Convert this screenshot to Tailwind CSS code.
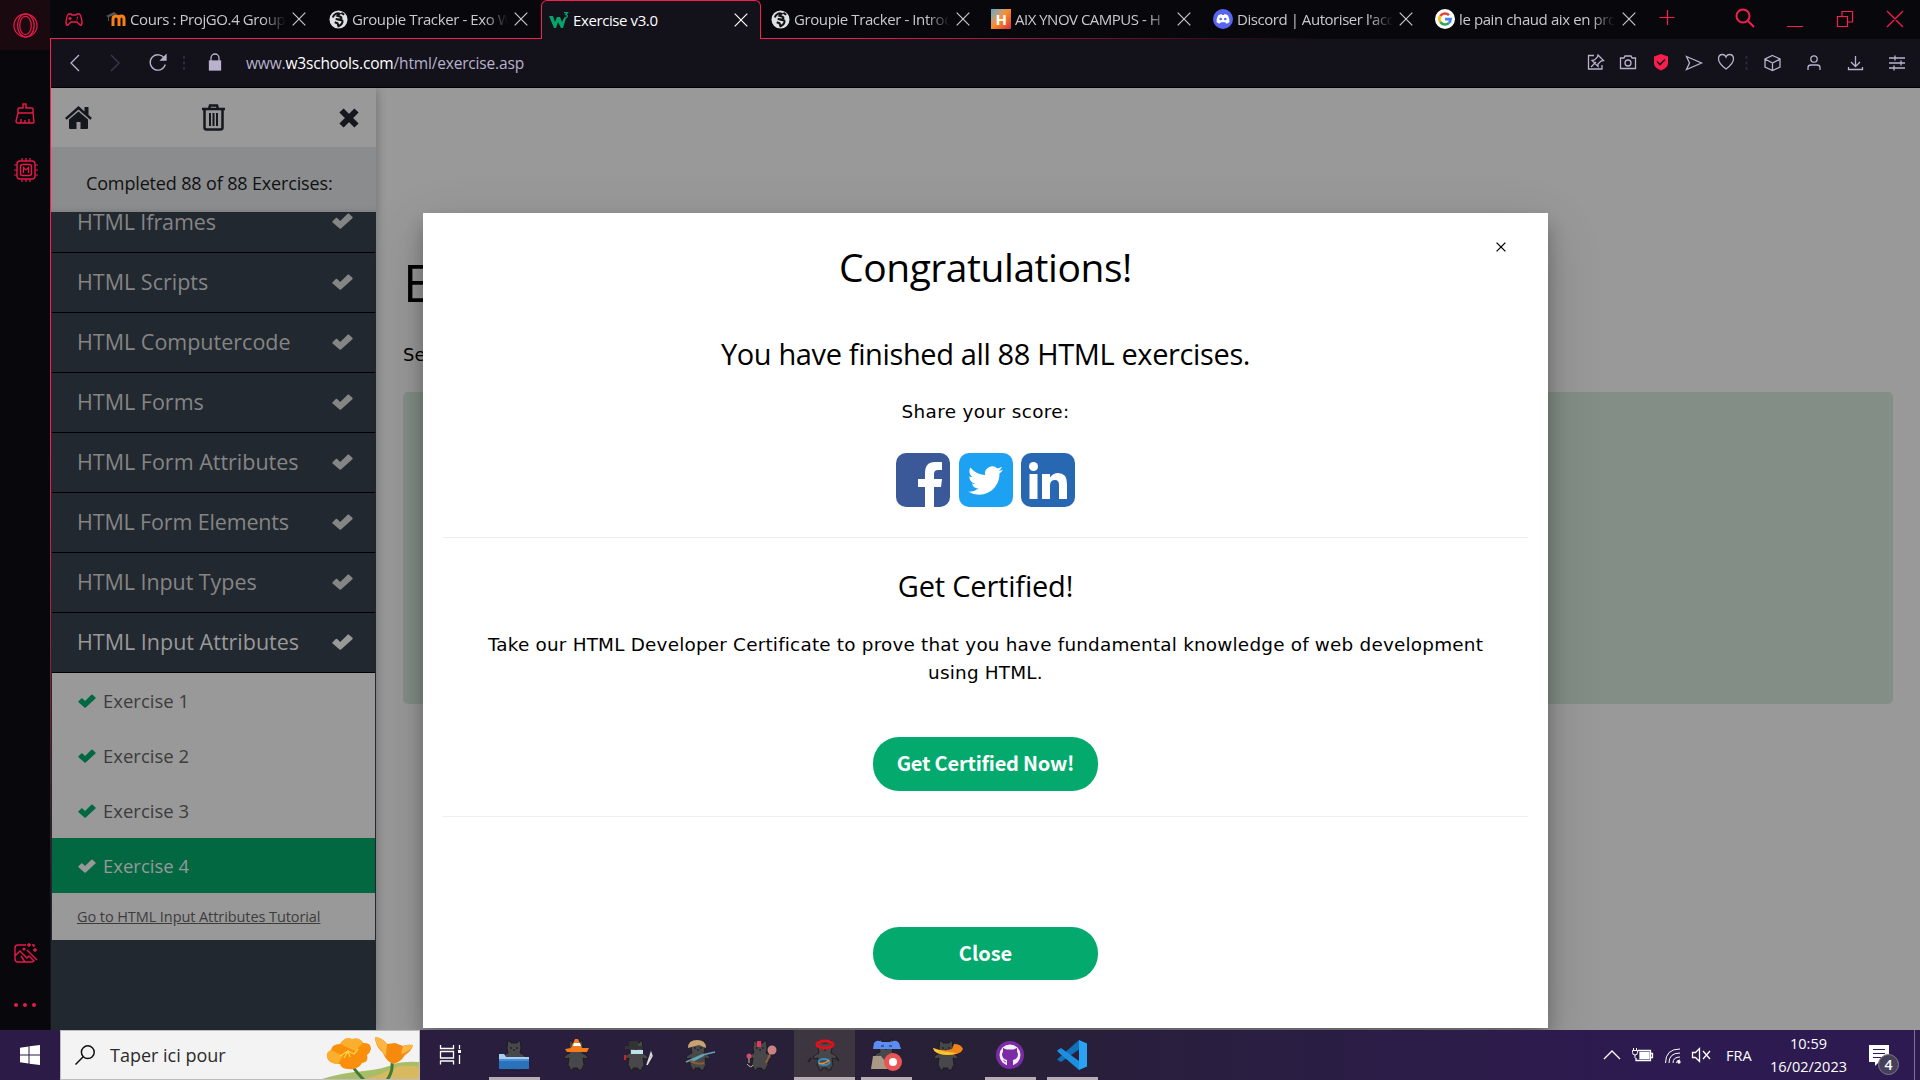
<!DOCTYPE html>
<html lang="fr">
<head>
<meta charset="utf-8">
<title>Exercise v3.0</title>
<script src="https://cdn.jsdelivr.net/npm/@tailwindcss/browser@4"></script>
</head>
<body class="w-[1920px] h-[1080px] overflow-hidden bg-[#08070b] font-['Open_Sans',sans-serif] flex flex-col">
<svg class="hidden">
  <symbol id="check" viewBox="0 0 21 16"><path d="M.6 8.2 3.800 5a1 1 0 0 1 1.400 0L8.200 8 15.600.700a1 1 0 0 1 1.400 0L20.400 3.800a1 1 0 0 1 0 1.400L9 15.500a1 1 0 0 1-1.400 0L.6 9.600a1 1 0 0 1 0-1.400z"/></symbol>
  <symbol id="x" viewBox="0 0 14 14"><path d="M.7.7l12.600 12.600M13.300.7.7 13.300" fill="none" stroke="currentColor" stroke-width="1.200"/></symbol>
  <symbol id="globe" viewBox="0 0 20 20"><circle cx="10" cy="10" r="9.500" fill="#dfe1e5"/><path d="M4 8c1-4 5-5 7-4l-2 2 3 1c2 1 1 3-1 3l-4-.5M9 10l5 1c1 2-1 5-4 6l-1-3-3-1M13 3l3 2" fill="none" stroke="#111" stroke-width="2.200"/></symbol>
</svg>

<div class="flex h-[1030px]">
  <!-- Browser side rail -->
  <aside class="w-[50px] flex flex-col items-center text-[#e8194a]">
    <div class="w-full h-[50px] bg-[#1a0a10] flex items-center justify-center">
      <svg class="size-[25px]" viewBox="0 0 26 26" fill="none" stroke="currentColor" stroke-width="1.300"><circle cx="13" cy="13" r="12"/><ellipse cx="13" cy="13" rx="6" ry="9.500"/><path d="M13 1c-11 1-11 23 0 24M13 1c4 0 9 4 9 12s-5 12-9 12"/></svg>
    </div>
    <svg class="mt-[53px] w-5 h-[21px]" viewBox="0 0 20 21" fill="none" stroke="currentColor" stroke-width="1.400"><path d="M8 5V1h3v4h6q1 0 1 1v4H3V6q0-1 1-1zM3 10 1 18q0 2 2 2h15q1 0 1-1l-1-9M6 16v4M10 17v3M14 16v4"/></svg>
    <svg class="mt-[34px] ml-px size-6" viewBox="0 0 24 24" fill="none" stroke="currentColor" stroke-width="1.400"><rect x="3" y="3" width="18" height="18" rx="3"/><rect x="6.500" y="6.500" width="11" height="11" rx="2"/><path d="M9.500 15V9.500l2.500 2.500 2.500-2.500V15M8 0v3M12 0v3M16 0v3M8 21v3M12 21v3M16 21v3M0 7h3M0 12h3M0 17h3M21 7h3M21 12h3M21 17h3" stroke-width="1.200"/></svg>
    <svg class="mt-[761px] ml-[2px] w-6 h-5" viewBox="0 0 24 20" fill="none" stroke="currentColor" stroke-width="1.400"><path d="M12 2H4Q1 2 1 5v11q0 3 3 3h13q3 0 3-2M1 13l5-5 5 5 2 2 2-2 5 5M7 13l4 6M13 7l10 10M15 0v4M13 2h4M21 5v4M19 7h4M18 2h2v2"/><circle cx="10" cy="6" r=".8"/></svg>
    <div class="mt-[40px] flex gap-[5px]"><i class="size-1 rounded-full bg-[#e8194a]"></i><i class="size-1 rounded-full bg-[#e8194a]"></i><i class="size-1 rounded-full bg-[#e8194a]"></i></div>
  </aside>

  <div class="w-[1870px] flex flex-col">
    <!-- Tab strip -->
    <header class="h-[39px] flex text-[#c9c9cd] text-[15px] tracking-[-0.4px] leading-[38px] whitespace-nowrap">
      <div class="w-[50px] flex flex-col shrink-0"><div class="h-[38px] pl-[15px] pt-[13px]"><svg class="w-[18px] h-[13px]" viewBox="0 0 18 13" fill="none" stroke="#f01c4c" stroke-width="1.400"><path d="M4 1h2l1 1h4l1-1h2q2 0 3 8 0 4-2 3l-3-3H6l-3 3q-2 1-2-3Q2 1 4 1z"/><path d="M5 4v3M3.500 5.500h3M12 4.500h1M11.500 6.500h1"/></svg></div><div class="h-px bg-[#fa1e4e]"></div></div>
      <div class="w-[221px] border-b border-[#fa1e4e] flex items-center pl-[6px]">
        <svg class="w-5 h-3.5 mr-1 shrink-0" viewBox="0 0 20 14"><path d="M7 14V7q0-3 3-3t3 3v7M13 7q0-3 2.500-3T18 7v7" fill="none" stroke="#f98012" stroke-width="3"/><path d="M0 4 8 0l3 2-8 3v4H2V5z" fill="#555"/></svg>
        <span class="w-[156px] mask-r-from-85%">Cours : ProjGO.4 Group</span><svg class="size-3.5 ml-[6px]"><use href="#x"/></svg>
      </div>
      <div class="w-[220px] border-b border-[#fa1e4e] flex items-center pl-[8px]">
        <svg class="size-[19px] mr-1 shrink-0"><use href="#globe"/></svg>
        <span class="w-[156px] mask-r-from-85%">Groupie Tracker - Exo W</span><svg class="size-3.5 ml-[6px]"><use href="#x"/></svg>
      </div>
      <div class="w-[220px] border border-b-0 border-[#fa1e4e] rounded-t-[6px] bg-[#13111a] text-white flex items-center pl-[7px]">
        <svg class="w-5 h-4 mr-1 shrink-0" viewBox="0 0 20 16"><path d="M0 4h4l2 6 2-5h3l2 5 2-4h2l-3 10h-2l-3-6-2 6H5z" fill="#04a56c"/><path d="M15 .6h3.500l-1.800 2q2 .2 1.600 1.900T15 6" fill="none" stroke="#04a56c" stroke-width="1.200"/></svg>
        <span class="w-[156px]">Exercise v3.0</span><svg class="size-3.5 ml-[5px]"><use href="#x"/></svg>
      </div>
      <div class="flex w-[665px] border-b [border-image:linear-gradient(to_right,#fa1e4e,#fa1e4e_10%,transparent_85%)_1]">
        <div class="w-[222px] flex items-center pl-[10px]">
          <svg class="size-[19px] mr-1 shrink-0"><use href="#globe"/></svg>
          <span class="w-[156px] mask-r-from-85%">Groupie Tracker - Introd</span><svg class="size-3.5 ml-[6px]"><use href="#x"/></svg>
        </div>
        <div class="w-[221px] flex items-center pl-[8px]">
          <div class="size-5 mr-1 shrink-0 bg-linear-to-br from-[#3aa8c9] via-[#fb8a20] to-[#d32a3c] text-white font-bold text-[15px] leading-5 text-center">H</div>
          <span class="w-[156px] tracking-[-0.5px] mask-r-from-85%">AIX YNOV CAMPUS - H</span><svg class="size-3.5 ml-[6px]"><use href="#x"/></svg>
        </div>
        <div class="w-[221px] flex items-center pl-[9px]">
          <svg class="size-5 mr-1 shrink-0" viewBox="0 0 20 20"><circle cx="10" cy="10" r="10" fill="#5865f2"/><path d="M5 6.500q2-1.500 3.500-1.500l.5 1h2l.5-1q2 0 3.500 1.500 1.500 3 1.500 6.500-2 2-3.500 1.500l-.8-1.300H7.800L7 14.500Q5 14.500 3.500 13 3.500 9.500 5 6.500z" fill="#fff"/><circle cx="7.700" cy="10" r="1.300" fill="#5865f2"/><circle cx="12.300" cy="10" r="1.300" fill="#5865f2"/></svg>
          <span class="w-[156px] tracking-[-0.450px] mask-r-from-85%">Discord | Autoriser l'acc</span><svg class="size-3.5 ml-[6px]"><use href="#x"/></svg>
        </div>
      </div>
      <div class="w-[221px] flex items-center pl-[9px] pb-px">
        <svg class="size-5 mr-1 shrink-0" viewBox="0 0 20 20" fill="none" stroke-width="2.600"><circle cx="10" cy="10" r="10" fill="#fff"/><path d="M14 6.200A5.600 5.600 0 0 0 5.300 7" stroke="#ea4335"/><path d="M5.300 7a5.600 5.600 0 0 0 0 6" stroke="#fbbc05"/><path d="M5.300 13a5.600 5.600 0 0 0 8.700.8" stroke="#34a853"/><path d="M14 13.800a5.600 5.600 0 0 0 1.600-3.700H10" stroke="#4285f4"/></svg>
        <span class="w-[156px] mask-r-from-85%">le pain chaud aix en pro</span><svg class="size-3.5 ml-[7px]"><use href="#x"/></svg>
      </div>
      <svg class="w-[273px] h-[38px] shrink-0" viewBox="1647 0 273 38" fill="none" stroke="#fa1e4e"><path d="M1659.500 17.500h15M1667.500 10v15M1787 26.500h16M1837.500 16.500h10v10h-10zM1842 16v-4.500h10.500V22H1848M1887 11l16 16M1903 11l-16 16" stroke-width="1.200"/><g stroke-width="2"><circle cx="1743" cy="16" r="6.500"/><path d="m1748 21 6 6"/></g></svg>
    </header>

    <div class="flex grow">
      <div class="w-px bg-linear-to-b from-[#fa1e4e] from-40% to-[#13111a] to-90%"></div>
      <div class="grow flex flex-col">
        <!-- Address bar -->
        <nav class="h-[49px] bg-[#13111a] border-b border-black flex text-[#b8b2cc]">
          <svg class="w-[195px] h-12 shrink-0" viewBox="51 39 195 48" fill="none" stroke="currentColor" stroke-width="1.300"><path d="m79 55-8 8 8 8"/><path d="m111 55 8 8-8 8" stroke="#3c3949"/><path d="M164.500 58.500a7.700 7.700 0 1 0 .8 6"/><path d="M161 60h5v-5z" fill="currentColor"/><path d="M184 56v14" stroke="#2c2939" stroke-width="2" stroke-dasharray="3 2.500"/><path d="M211 61v-3a4 4 0 0 1 8 0v3"/><rect x="209.500" y="61" width="11" height="9" fill="currentColor"/></svg>
          <div class="w-[1331px] text-[15.500px] tracking-[-0.170px] leading-[48px]">www.<span class="text-white">w3schools.com</span>/html/exercise.asp</div>
          <svg class="w-[343px] h-12" viewBox="1577 39 343 48" fill="none" stroke="currentColor" stroke-width="1.300">
            <path d="M1594 55.500h-5.500v13.500h13.500v-4M1591 67l5-5M1598 55l5.500 5.500-2.500.5-3 3 0 2.500-6-6 2.500-.5 3-3z"/>
            <path d="M1620.500 58h3.500l1-2h6l1 2h3.500v10.500h-15z"/><circle cx="1628" cy="63" r="3"/>
            <path d="m1661 54 7 2.500v7q0 4-7 7-7-3-7-7v-7z" fill="#fa1e4e" stroke="none"/><path d="m1657 61.500 3 3 5-5" stroke="#13111a" stroke-width="1.600"/>
            <path d="m1686.500 56.500 15 6.500-15 6.500 3-6.500z"/>
            <path d="M1726 69q-7.500-5.500-7.500-10 0-4.500 4-4.500 2.500 0 3.500 2.500 1-2.500 3.500-2.500 4 0 4 4.500 0 4.500-7.500 10z"/>
            <path d="M1746.500 56v14" stroke="#2c2939" stroke-width="2" stroke-dasharray="3 2.500"/>
            <path d="m1772.500 55.500 7.500 3.500v8l-7.500 3.500-7.500-3.500v-8zM1765 59l7.500 4 7.500-4M1772.500 63v7.500"/>
            <circle cx="1814" cy="59" r="3.200"/><path d="M1808 70v-2.500q0-2.500 3-2.500h6q3 0 3 2.500V70"/>
            <path d="M1855.500 56v10M1851 62l4.500 4.500 4.500-4.500M1848.500 67v2.500h14V67"/>
            <path d="M1889 58h16M1889 63h16M1889 68h16M1895 55.500v5M1901 60.500v5M1894 65.500v5"/>
          </svg>
        </nav>

        <!-- Page -->
        <main class="relative h-[942px] flex bg-[#999] overflow-hidden">
          <section class="w-[325px] flex flex-col bg-[#22282f] shadow-[0_2px_10px_rgba(0,0,0,0.3)]">
            <div class="h-[59px] shrink-0 bg-[#999] flex items-center justify-between pl-[14px] pr-[16px] text-[#15171f]">
              <svg class="w-[27px] h-[23px]" viewBox="0 0 27 23" fill="currentColor"><path d="M13.500 0 0 12l1.700 1.800L13.500 3.600l11.800 10.200L27 12l-3.500-3.100V1h-4v4.400zM13.500 5.500 4 13.600V22q0 1 1 1h6.500v-7h4v7H22q1 0 1-1v-8.400z"/></svg>
              <svg class="w-[23px] h-[27px] -ml-[3px] -mt-px" viewBox="0 0 23 27" fill="none" stroke="currentColor" stroke-width="2"><path d="M0 5h23M7 5l1-3.500h7L16 5M2.500 5v18.500q0 2 2 2h14q2 0 2-2V5" stroke-width="2.500"/><path d="M8 9v13M11.500 9v13M15 9v13"/></svg>
              <svg class="size-[22px]" viewBox="0 0 22 22"><path d="m3.500 3.500 15 15M18.500 3.500l-15 15" stroke="currentColor" stroke-width="6"/></svg>
            </div>
            <div class="h-[65px] shrink-0 bg-[#8b8c8e] pl-[35px] pt-[23px] text-[18px] tracking-[-0.150px] leading-[27px] text-[#111] whitespace-nowrap shadow-[inset_0_-6px_6px_-6px_rgba(0,0,0,0.15)]">Completed 88 of 88 Exercises:</div>
            <div class="px-px flex flex-col text-[21.500px] leading-[58px] text-[#858585] whitespace-nowrap">
              <div class="h-[41px] border-b border-black overflow-hidden flex items-end justify-between pl-[25px] pr-[22px]"><span class="h-[58px] mb-px tracking-[-0.100px]">HTML Iframes</span><svg class="w-[21px] h-4 mb-[23px] fill-current"><use href="#check"/></svg></div>
              <div class="h-[60px] border-b border-black flex items-center justify-between pl-[25px] pr-[22px]"><span class="pb-px">HTML Scripts</span><svg class="w-[21px] h-4 mb-px fill-current"><use href="#check"/></svg></div>
              <div class="h-[60px] border-b border-black flex items-center justify-between pl-[25px] pr-[22px]"><span class="pb-px">HTML Computercode</span><svg class="w-[21px] h-4 mb-px fill-current"><use href="#check"/></svg></div>
              <div class="h-[60px] border-b border-black flex items-center justify-between pl-[25px] pr-[22px]"><span class="pb-px">HTML Forms</span><svg class="w-[21px] h-4 mb-px fill-current"><use href="#check"/></svg></div>
              <div class="h-[60px] border-b border-black flex items-center justify-between pl-[25px] pr-[22px]"><span class="pb-px">HTML Form Attributes</span><svg class="w-[21px] h-4 mb-px fill-current"><use href="#check"/></svg></div>
              <div class="h-[60px] border-b border-black flex items-center justify-between pl-[25px] pr-[22px]"><span class="pb-px tracking-[-0.150px]">HTML Form Elements</span><svg class="w-[21px] h-4 mb-px fill-current"><use href="#check"/></svg></div>
              <div class="h-[60px] border-b border-black flex items-center justify-between pl-[25px] pr-[22px]"><span class="pb-px tracking-[-0.070px]">HTML Input Types</span><svg class="w-[21px] h-4 mb-px fill-current"><use href="#check"/></svg></div>
              <div class="h-[60px] border-b border-black flex items-center justify-between pl-[25px] pr-[22px] text-[#999]"><span class="pb-px">HTML Input Attributes</span><svg class="w-[21px] h-4 mb-px fill-current"><use href="#check"/></svg></div>
            </div>
            <div class="mx-px bg-[#999] text-[18.500px] text-[#3c3c3c] flex flex-col whitespace-nowrap">
              <div class="h-[55px] flex items-center gap-[7px] pt-px pl-[26px]"><svg class="w-[18px] h-3.5 fill-[#026841]"><use href="#check"/></svg>Exercise 1</div>
              <div class="h-[55px] flex items-center gap-[7px] pt-px pl-[26px]"><svg class="w-[18px] h-3.5 fill-[#026841]"><use href="#check"/></svg>Exercise 2</div>
              <div class="h-[55px] flex items-center gap-[7px] pt-px pl-[26px]"><svg class="w-[18px] h-3.5 fill-[#026841]"><use href="#check"/></svg>Exercise 3</div>
              <div class="h-[55px] flex items-center gap-[7px] pt-px pl-[26px] bg-[#026841] text-[#999]"><svg class="w-[18px] h-3.5 fill-current"><use href="#check"/></svg>Exercise 4</div>
              <div class="h-[47px] flex items-center pl-[25px] text-[14.500px] tracking-[-0.080px] underline">Go to HTML Input Attributes Tutorial</div>
            </div>
          </section>

          <section class="w-[1544px] pl-[27px] pr-[27px] flex flex-col">
            <h1 class="mt-[158px] text-[52px] leading-[72px]">Exercise</h1>
            <p class="mt-[23px] font-['DejaVu_Sans',sans-serif] text-[18px] leading-7">Select the correct answer</p>
            <div class="mt-[23px] h-[312px] rounded-[5px] bg-[#838f86]"></div>
          </section>

          <!-- Completion dialog, over the page -->
          <div class="absolute left-[372px] top-[125px] w-[1125px] h-[815px] px-5 bg-white text-black shadow-[0_12px_16px_rgba(0,0,0,0.24),0_17px_50px_rgba(0,0,0,0.19)] flex flex-col items-center whitespace-nowrap">
            <svg class="absolute right-[42px] top-[29px] size-[10px]" viewBox="0 0 10 10"><path d="m.6.6 8.800 8.800M9.400.6.6 9.400" stroke="#000" stroke-width="1.300"/></svg>
            <h2 class="mt-[24px] text-[39px] leading-[60px] tracking-[-0.450px]">Congratulations!</h2>
            <h3 class="mt-[34px] text-[29px] leading-[45px] tracking-[-0.370px]">You have finished all 88 HTML exercises.</h3>
            <p class="mt-[22px] font-['DejaVu_Sans',sans-serif] text-[18.400px] leading-7 tracking-[0.380px]">Share your score:</p>
            <div class="mt-[27px] flex gap-[8.500px]">
              <svg class="size-[54px]" viewBox="0 0 54 54"><rect width="54" height="54" rx="10" fill="#3b5998"/><path d="M29 54V34h-7v-8h7v-6q0-11 10-11h7v8h-4q-4 0-4 4v5h8l-1 8h-7v20z" fill="#fff"/></svg>
              <svg class="size-[54px]" viewBox="0 0 54 54"><rect width="54" height="54" rx="10" fill="#1da1f2"/><path transform="translate(9 10) scale(1.460)" d="M23.950 4.570a10 10 0 0 1-2.820.770 4.960 4.960 0 0 0 2.160-2.720c-.950.560-2 .970-3.130 1.200a4.920 4.920 0 0 0-8.380 4.480C7.690 8.100 4.070 6.130 1.640 3.160a4.820 4.820 0 0 0-.670 2.470c0 1.710.870 3.210 2.190 4.100a4.900 4.900 0 0 1-2.230-.620v.060a4.920 4.920 0 0 0 3.950 4.830 5 5 0 0 1-2.210.080 4.940 4.940 0 0 0 4.600 3.420A9.870 9.870 0 0 1 0 19.540a13.990 13.990 0 0 0 7.550 2.210c9.050 0 14-7.500 14-13.980 0-.210 0-.420-.020-.630a9.940 9.940 0 0 0 2.460-2.550z" fill="#fff"/></svg>
              <svg class="size-[54px]" viewBox="0 0 54 54" fill="#fff"><rect width="54" height="54" rx="10" fill="#2867b2"/><circle cx="12.500" cy="13.500" r="4.500"/><path d="M8.500 21h8v25h-8zM21 21h8v3.500q3-4.500 8-4.500 9 0 9 11v15h-8V32q0-5-4-5-5 0-5 5.500V46h-8z"/></svg>
            </div>
            <hr class="mt-[30px] w-[1085px] border-[#eee]">
            <h3 class="mt-[25px] text-[29px] leading-[45px] tracking-[-0.200px]">Get Certified!</h3>
            <p class="mt-[23px] font-['DejaVu_Sans',sans-serif] text-[18.400px] leading-7 text-center tracking-[0.200px]">Take our HTML Developer Certificate to prove that you have fundamental knowledge of web development<br>using HTML.</p>
            <div class="mt-[50px] w-[225px] h-[54px] rounded-[26px] bg-[#04aa6d] text-white font-bold font-['Noto_Sans_CJK_SC',sans-serif] text-[20px] tracking-[-0.200px] leading-[52px] text-center">Get Certified Now!</div>
            <hr class="mt-[25px] w-[1085px] border-[#eee]">
            <div class="mt-[110px] w-[225px] h-[53px] rounded-[26px] bg-[#04aa6d] text-white font-bold font-['Noto_Sans_CJK_SC',sans-serif] text-[20px] leading-[52px] text-center">Close</div>
          </div>
        </main>
      </div>
    </div>
  </div>
</div>

<!-- Taskbar -->
<footer class="h-[50px] flex bg-linear-to-r from-[#2c1b47] via-[#282036] via-50% to-[#2d1a50] to-85% text-white">
  <svg class="w-[60px] h-[50px]" viewBox="0 0 60 50" fill="#fff"><path d="M20 17.800 28.500 16.500v8H20zM29.500 16.300 40 15v9.500H29.500zM20 25.500h8.500v8L20 32.300zM29.500 25.500H40V35l-10.500-1.300z"/></svg>
  <div class="w-[360px] bg-[#f3f3f3] border border-[#bdbdbd] flex items-center">
    <svg class="w-5 h-5 ml-[14px]" viewBox="0 0 20 20" fill="none" stroke="#111" stroke-width="1.500"><circle cx="12.800" cy="7.200" r="6.400"/><path d="M8.200 11.800.5 19.500"/></svg>
    <div class="ml-[15px] w-[139px] pt-px text-[18px] text-[#2b2b2b] whitespace-nowrap">Taper ici pour</div>
    <svg class="w-[170px] h-12" viewBox="249 0 170 48">
      <path d="M319 49q20-7 45-9 20-2 30-7 10-3 26-2v18z" fill="#a9bd68"/><path d="M355 49q20-2 32-9 13-8 33-4v13z" fill="#d9b95f"/>
      <path d="M353 36q4 6 11 13M392 32q1 9-5 17" fill="none" stroke="#3f7a3a" stroke-width="3"/>
      <path d="M340 13q5-8 12-5 8-2 11 4 8-1 8 6-1 4-4 6 2 7-5 8-4 7-13 6-8 0-9-5-12 0-13-7-1-4 4-7 1-6 9-6z" fill="#f98f0a"/><path d="M340 13q5-8 12-5 8-2 11 4l-8 8zM327 26q-1-5 4-7l12 6-5 8q-9 0-11-7z" fill="#fcae2e"/><path d="m340 25 8-5 6 3 4-5M344 27l4-7 2 6" stroke="#ffd64a" fill="none" stroke-width="1.300"/>
      <path d="M375 6q8 1 12 7l8-1 8 3q5-2 10-1-2 7-8 10-5 8-12 9-7-3-10-11-8-7-8-16z" fill="#f58a0c"/><path d="M375 6q8 1 12 7l-1 12q-3-3-3-4-8-7-8-15zM403 15q5-2 10-1-4 8-12 9z" fill="#fdb544"/>
    </svg>
  </div>
  <svg class="w-[60px] h-[50px]" viewBox="420 0 60 50" fill="none" stroke="#fff" stroke-width="1.300"><path d="M440.500 15v3.500h13V15M440.500 34.500V31h13v3.500M440.500 21.500h13V28h-13zM459.500 15v4M459.500 25v9"/><path d="M458 20h3v3h-3z" fill="#fff" stroke="none"/></svg>
  <svg class="w-[1110px] h-[50px]" viewBox="480 0 1110 50">
    <defs><g id="cat"><path d="m7 2 3 3h6l3-3 1 8-1 5q3 1 6 4l-1 2-4-1 1 7-2 3v2h-4v-2h-5v2H7v-2l-2-3 1-7-4 1-1-2q3-3 6-4l-1-5z" fill="#48474a" stroke="#19171b" stroke-width=".8"/><path d="M9 10h2M15 10h2M12 12h2" stroke="#161418"/></g></defs>
    <rect x="794" width="61" height="50" fill="#3d3641"/>
    <g fill="#b9adb5"><path d="M489 47h51v3h-51zM794 47h61v3h-61zM861 47h51v3h-51zM985 47h51v3h-51zM1047 47h51v3h-51z"/></g>
    <use href="#cat" x="501" y="8"/><path d="M499 24h5l2 3h23v12h-30z" fill="#4a90d9"/><path d="M499 31h30v8h-30z" fill="#2a72bb"/><path d="M499 24h5l2 3h23v2h-30z" fill="#a7cff2"/>
    <use href="#cat" x="563" y="8"/><path d="m575 9 3 0 4 9h7l-2 4h-20l-2-3 6-1z" fill="#f57c1a"/><path d="M574 13h6l1 3h-8z" fill="#fff"/>
    <use href="#cat" x="623" y="8"/><path d="M629 11h9v5h4v3h-17v-3h4z" fill="#333"/><path d="M631 20h12v4h-12z" fill="#bfe3ee"/><path d="m647 35 5-9-1-3z" fill="none" stroke="#ddd" stroke-width="1.500"/><path d="M624 25h2v5h-2z" fill="#c22"/>
    <use href="#cat" x="685" y="8"/><path d="M688 18q0-8 9-8t9 8l-7-3z" fill="#c8a273"/><path d="m686 32 16-7 13-3M691 32l13-7" stroke="#5fa6b8" stroke-width="1.500" fill="none"/><path d="M690 31q8 4 14 2" stroke="#8a5b36" stroke-width="2" fill="none"/>
    <use href="#cat" x="747" y="8"/><path d="M757 11h4v6h-4z" fill="#e8365c"/><path d="m766 33 5-11" stroke="#915f3a" stroke-width="2"/><circle cx="772" cy="20" r="4.500" fill="#c98383"/><circle cx="749" cy="26" r="2.500" fill="#d44a6a"/><path d="M749 28v5M747 34q4 5 6 1" stroke="#c9b98a" fill="none"/>
    <use href="#cat" x="812" y="8"/><ellipse cx="825" cy="14.500" rx="8" ry="3.500" fill="none" stroke="#e3101b" stroke-width="3"/><path d="m811 28-3 4M836 27l3 4" stroke="#222" stroke-width="2"/><ellipse cx="824" cy="32" rx="5.500" ry="3" fill="none" stroke="#2d8fc9" stroke-width="2"/><path d="M819 33q5 2 10-3" stroke="#f08b20" fill="none" stroke-width="1.500"/>
    <use href="#cat" x="873" y="7"/><path d="M874 13q3-4 8-1h9q5-3 8 1l2 6h-28z" fill="#5b8df5"/><path d="M881 16h3M889 16h3" stroke="#223"/><path d="M873 26h8l4 5 3 8h-17z" fill="#a99883"/><circle cx="893" cy="32" r="9" fill="#ea5455"/><circle cx="893" cy="32" r="4" fill="#fff"/>
    <use href="#cat" x="933" y="8"/><path d="M933 18q1 6 14 7 14 0 16-6-2-5-9-5l-2 5q-8 3-19-1z" fill="#f08418"/><path d="M933 18q1 6 14 7 6 0 10-2-15-1-24-5z" fill="#fbc62c"/>
    <circle cx="1010" cy="25" r="14" fill="#7b2ba3"/><circle cx="1010" cy="25" r="10.500" fill="#f4eefa"/><path d="M1007 36v-6q-5-1-5-6l1-2.500V18l3.500 1.500h7L1017 18v3.500l1 2.500q0 5-5 6v6zM1007 32.500q-3 0-4-3" fill="#7b2ba3"/>
    <path d="M1057 29.500 1079 10v9.500l-18 12.500z" fill="#1070b8"/><path d="M1057 20.500l4-2.500 18 13v9l-21-18z" fill="#1c8fe0"/><path d="m1079 10 8 3.500v23l-8 3.500z" fill="#2ba3f5"/>
  </svg>
  <svg class="w-[130px] h-[50px]" viewBox="1590 0 130 50" fill="none" stroke="#fff" stroke-width="1.300"><path d="m1604 29 8-8 8 8"/><path d="M1638 20.500h12.500v10H1636V28M1651 23.500h1.500v4H1651"/><path d="M1632.500 20.500h5v2q0 2.500-2.500 2.500t-2.500-2.500zM1633.500 18v2M1636.500 18v2M1635 25v3" stroke-width="1"/><path d="M1640 22.500h9v6h-9z" fill="#fff"/><path d="M1665.500 33q0-14 14.500-14M1669 33q0-10 11-10M1673 33q0-6 7-6M1676.500 33q0-3 3.500-3" stroke-width="1"/><circle cx="1679" cy="32" r="1" fill="#fff"/><path d="M1692.500 22.500h3l4-4v13l-4-4h-3zM1703 21l7 8M1710 21l-7 8"/></svg>
  <div class="w-[45px] pl-[6px] text-[14.500px] leading-[51px]">FRA</div>
  <div class="w-[87px] text-center text-[14.500px] leading-[23px] pt-[2px] whitespace-nowrap">10:59<br>16/02/2023</div>
  <svg class="w-[62px] h-[50px]" viewBox="1852 0 62 50"><path d="M1869 15h20v17h-10l-4 4v-4h-6z" fill="#fff"/><path d="M1873 19.500h12M1873 23.500h12M1873 27.500h8" stroke="#2d1a50" stroke-width="1.200"/><circle cx="1888.500" cy="34.500" r="10" fill="#46405a" stroke="#7d7889"/><text x="1888.500" y="39.500" fill="#fff" text-anchor="middle" font-size="14" font-weight="600" font-family="Open Sans">4</text></svg>
  <div class="w-px bg-[#7d7296]"></div>
</footer>
</body>
</html>
